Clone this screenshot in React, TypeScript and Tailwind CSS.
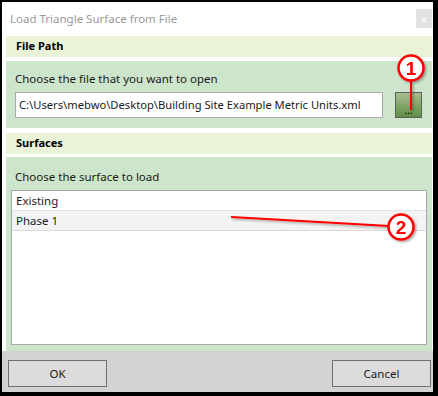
import React from "react";

const font = { fontFamily: '"Noto Sans", "Open Sans", "Liberation Sans", sans-serif' };

function Callout() {
  // red annotation marks drawn over the dialog
  return (
    <svg className="absolute left-0 top-0 pointer-events-none" width="438" height="396" viewBox="0 0 438 396">
      <defs>
        <filter id="sh" x="-50%" y="-50%" width="200%" height="200%">
          <feDropShadow dx="1.5" dy="1.5" stdDeviation="1.2" floodColor="#000" floodOpacity="0.35" />
        </filter>
      </defs>
      <g filter="url(#sh)">
        <line x1="411" y1="80" x2="411" y2="110" stroke="#ff0000" strokeWidth="2" />
        <circle cx="411" cy="68" r="12.5" fill="#fff" stroke="#ff0000" strokeWidth="2.5" />
        <text x="411" y="75" textAnchor="middle" fontSize="19" fontWeight="700" fill="#ff0000" fontFamily="Liberation Sans, sans-serif">1</text>
      </g>
      <g filter="url(#sh)">
        <line x1="231" y1="217" x2="389" y2="226" stroke="#ff0000" strokeWidth="2" />
        <circle cx="401" cy="227" r="12.5" fill="#fff" stroke="#ff0000" strokeWidth="2.5" />
        <text x="401" y="234" textAnchor="middle" fontSize="19" fontWeight="700" fill="#ff0000" fontFamily="Liberation Sans, sans-serif">2</text>
      </g>
    </svg>
  );
}

export default function App() {
  return (
    <div className="relative w-[438px] h-[396px] bg-black pl-[2px] pt-[2px] pr-[5px] pb-[4px]" style={font}>
      <div className="h-full bg-white flex flex-col">
        {/* Title bar */}
        <div className="h-[34px] flex items-start justify-between shrink-0">
          <span className="mt-[8px] ml-[8px] text-[11.5px] text-[#9a9a9a]">Load Triangle Surface from File</span>
          <div className="mt-[7px] mr-[1px] w-[16px] h-[19px] bg-[#e2e2e2] flex items-center justify-center text-[11px] text-white leading-none">x</div>
        </div>

        <div className="flex-1 flex flex-col pl-[4px] pr-[1px]">
          {/* File Path */}
          <div className="h-[21px] bg-[#eaf3d8] flex items-center pl-[10px] text-[11px] font-bold text-black">File Path</div>
          <div className="mt-[4px] h-[67px] bg-[#cde5cb] pl-[9px] pr-[10px] pt-[10px]">
            <div className="text-[11.5px] text-[#1a1a1a] leading-[16px]">Choose the file that you want to open</div>
            <div className="mt-[5px] flex items-center justify-between">
              <div className="w-[368px] h-[26px] bg-white border border-[#a9a9a9] flex items-center pl-[3px] text-[11.2px] text-[#1a1a1a] whitespace-nowrap overflow-hidden">
                C:\Users\mebwo\Desktop\Building Site Example Metric Units.xml
              </div>
              <div className="w-[27px] h-[26px] border border-[#606060] bg-gradient-to-b from-[#a7bd8f] to-[#5f8f45] flex items-end justify-center text-[10px] text-black leading-[14px]">...</div>
            </div>
          </div>

          {/* Surfaces */}
          <div className="mt-[5px] h-[21px] bg-[#eaf3d8] flex items-center pl-[10px] text-[11px] font-bold text-black">Surfaces</div>
          <div className="mt-[3px] flex-1 bg-[#cde5cb] px-[5px] pt-[12px] pb-[6px] flex flex-col">
            <div className="pl-[4px] text-[11.5px] text-[#1a1a1a] leading-[16px]">Choose the surface to load</div>
            <div className="mt-[5px] flex-1 bg-white border border-[#a9a9a9] text-[11.5px] text-[#1a1a1a]">
              <div className="h-[20px] flex items-center pl-[4px] border-b border-[#e3e3e3]">Existing</div>
              <div className="h-[20px] flex items-center pl-[4px] bg-[#f3f3f3] border-b border-[#dadada]">Phase 1</div>
            </div>
          </div>
        </div>

        {/* Footer */}
        <div className="h-[41px] shrink-0 bg-[#d3d3d3] flex items-start justify-between pl-[6px] pr-[2px] pt-[9px]">
          <button className="w-[99px] h-[27px] bg-[#dcdcdc] border border-[#707070] text-[11.5px] text-[#1a1a1a]">OK</button>
          <button className="w-[99px] h-[27px] bg-[#dcdcdc] border border-[#707070] text-[11.5px] text-[#1a1a1a]">Cancel</button>
        </div>
      </div>
      <Callout />
    </div>
  );
}
